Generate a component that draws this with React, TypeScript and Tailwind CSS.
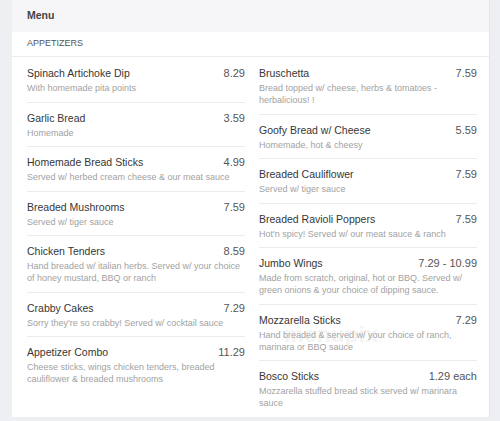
type Item = { name: string; price: string; desc: string }

const left: Item[] = [
  { name: "Spinach Artichoke Dip", price: "8.29", desc: "With homemade pita points" },
  { name: "Garlic Bread", price: "3.59", desc: "Homemade" },
  { name: "Homemade Bread Sticks", price: "4.99", desc: "Served w/ herbed cream cheese & our meat sauce" },
  { name: "Breaded Mushrooms", price: "7.59", desc: "Served w/ tiger sauce" },
  {
    name: "Chicken Tenders",
    price: "8.59",
    desc: "Hand breaded w/ italian herbs. Served w/ your choice of honey mustard, BBQ or ranch",
  },
  { name: "Crabby Cakes", price: "7.29", desc: "Sorry they're so crabby! Served w/ cocktail sauce" },
  {
    name: "Appetizer Combo",
    price: "11.29",
    desc: "Cheese sticks, wings chicken tenders, breaded cauliflower & breaded mushrooms",
  },
]

const right: Item[] = [
  { name: "Bruschetta", price: "7.59", desc: "Bread topped w/ cheese, herbs & tomatoes - herbalicious! !" },
  { name: "Goofy Bread w/ Cheese", price: "5.59", desc: "Homemade, hot & cheesy" },
  { name: "Breaded Cauliflower", price: "7.59", desc: "Served w/ tiger sauce" },
  { name: "Breaded Ravioli Poppers", price: "7.59", desc: "Hot'n spicy! Served w/ our meat sauce & ranch" },
  {
    name: "Jumbo Wings",
    price: "7.29 - 10.99",
    desc: "Made from scratch, original, hot or BBQ. Served w/ green onions & your choice of dipping sauce.",
  },
  {
    name: "Mozzarella Sticks",
    price: "7.29",
    desc: "Hand breaded & served w/ your choice of ranch, marinara or BBQ sauce",
  },
  { name: "Bosco Sticks", price: "1.29 each", desc: "Mozzarella stuffed bread stick served w/ marinara sauce" },
]

function MenuRow({ item }: { item: Item }) {
  return (
    <div className="border-b border-[#ebebeb] pt-[7px] pb-[7.5px] first:pt-2 last:border-b-0">
      <div className="flex h-4 items-center justify-between leading-4">
        <span className="text-[10.5px] text-[#363636]">{item.name}</span>
        <span className="text-[11px] text-[#555]">{item.price}</span>
      </div>
      <p className="mt-px text-[9px] leading-3 text-[#a2a2a2]">{item.desc}</p>
    </div>
  )
}

export default function App() {
  return (
    <div className="h-[421px] w-[500px] overflow-hidden bg-[#edeff3] pl-3 pr-[10px] font-['Liberation_Sans',Arial,sans-serif]">
      <div className="relative border-r border-[#e4e5e9] bg-white">
        {/* Card header */}
        <div className="flex h-8 items-center bg-[#f6f6f8] px-[15px]">
          <h2 className="text-[10.5px] font-bold text-[#444]">Menu</h2>
        </div>

        {/* Section title */}
        <div className="flex h-[25px] items-center border-b border-[#ececec] px-[15px]">
          <span className="text-[9px] uppercase text-[#555]">Appetizers</span>
        </div>

        <div className="grid grid-cols-[220px_226px] gap-x-2 pl-[13px]">
          <div className="flex flex-col pl-[2px]">
            {left.map((it) => (
              <MenuRow key={it.name} item={it} />
            ))}
          </div>
          <div className="flex flex-col pl-[6px] pr-[2px]">
            {right.map((it) => (
              <MenuRow key={it.name} item={it} />
            ))}
          </div>
        </div>

        {/* faint watermark */}
        <span className="pointer-events-none absolute left-[272px] top-[318px] text-[22px] font-bold tracking-wide text-[#c8c8c8] opacity-20">
          menupix
        </span>
      </div>
    </div>
  )
}
